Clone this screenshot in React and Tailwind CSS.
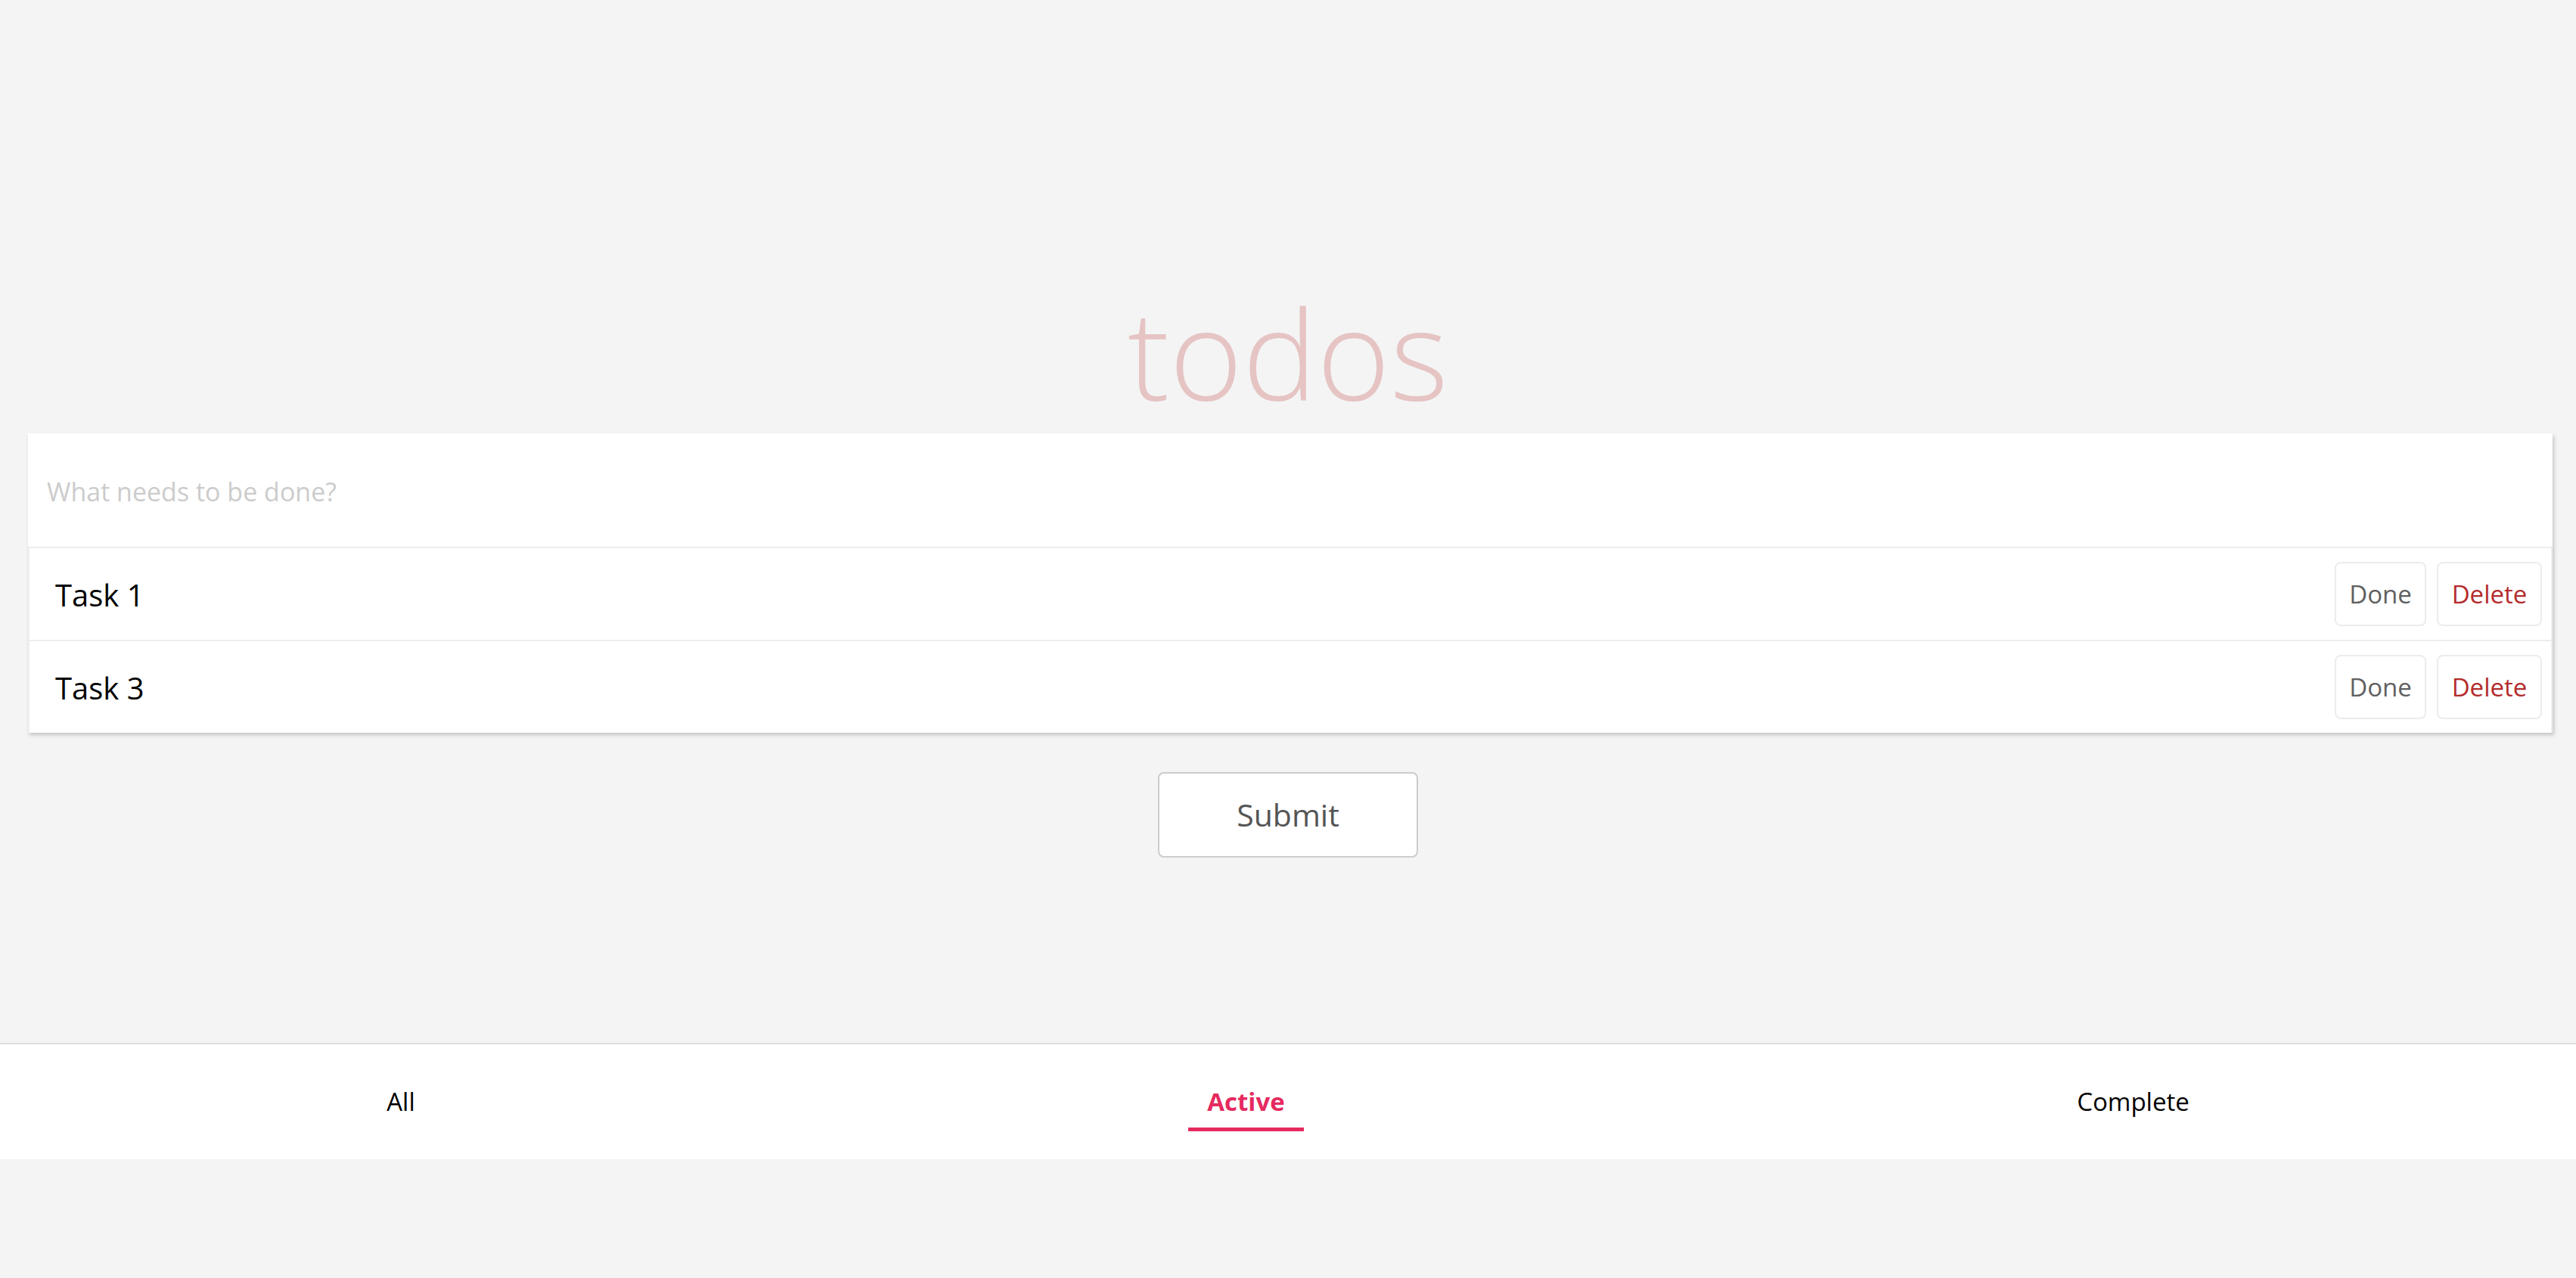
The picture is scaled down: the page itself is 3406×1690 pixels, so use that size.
import React from 'react';

const tasks = [
  { id: 1, title: 'Task 1' },
  { id: 3, title: 'Task 3' },
];

const TaskRow = ({ title }) => {
  return (
    <li className="flex items-center justify-between h-[123px] border-t-2 border-x-2 border-[#ededed] pl-[34px] pr-[12px]">
      <span className="text-[40px] text-black pt-[3px]">{title}</span>
      <div className="flex gap-[14px]">
        <button className="h-[85px] w-[121px] rounded-lg border-2 border-[#ececec] bg-white text-[33px] text-[#606060]">
          Done
        </button>
        <button className="h-[85px] w-[139px] rounded-lg border-2 border-[#ececec] bg-white text-[33px] text-[#b42c2c]">
          Delete
        </button>
      </div>
    </li>
  );
};

const NavItem = ({ label, active }) => {
  if (active) {
    return (
      <span className="relative px-[25px] text-[33px] font-bold text-[#e62a5f]">
        {label}
        <span className="absolute left-0 right-0 -bottom-[14px] h-[5px] bg-[#e62a5f]"></span>
      </span>
    );
  }
  return <span className="text-[33px] text-black">{label}</span>;
};

export default function App() {
  return (
    <div className="min-h-screen bg-[#f4f4f4] font-['Open_Sans','Noto_Sans',sans-serif] pt-[383px]">
      <h1 className="text-center text-[165px] font-light leading-none text-[#e5c4c3]">todos</h1>

      <div className="ml-[37px] mr-[31px] mt-[25px] bg-white shadow-[2px_3px_5px_rgba(0,0,0,0.2)]">
        <input
          type="text"
          placeholder="What needs to be done?"
          className="block w-full h-[150px] px-[25px] pt-[4px] text-[34px] outline-none placeholder:text-[#cccccc]"
        />
        <ul>
          {tasks.map((t) => (
            <TaskRow key={t.id} title={t.title} />
          ))}
        </ul>
      </div>

      <div className="flex justify-center mt-[52px]">
        <button className="h-[113px] w-[344px] rounded-lg border-2 border-[#cccccc] bg-white text-[41px] text-[#555555]">
          Submit
        </button>
      </div>

      <nav className="mt-[245px] flex h-[154px] items-center justify-around border-t-2 border-[#dddddd] bg-white">
        <NavItem label="All" />
        <NavItem label="Active" active />
        <NavItem label="Complete" />
      </nav>
    </div>
  );
}
